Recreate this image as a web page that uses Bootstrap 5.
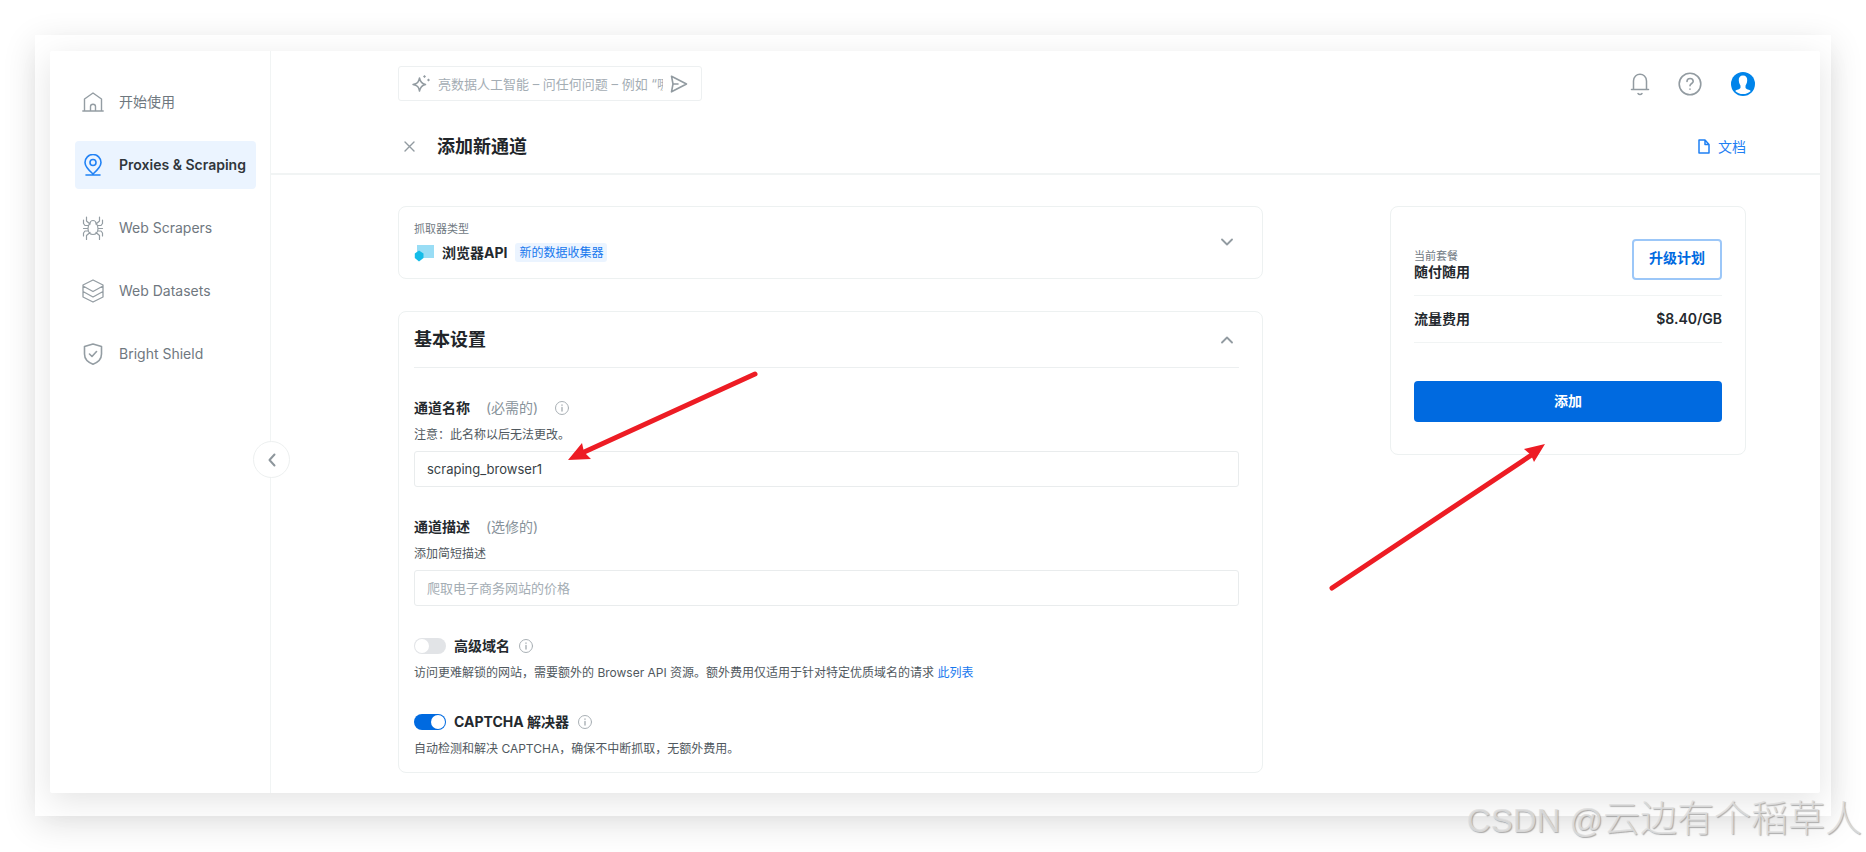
<!DOCTYPE html>
<html lang="zh-CN">
<head>
<meta charset="utf-8">
<meta name="viewport" content="width=device-width, initial-scale=1">
<title>添加新通道</title>
<link href="https://cdn.jsdelivr.net/npm/bootstrap@5.3.0/dist/css/bootstrap.min.css" rel="stylesheet">
<style>
:root{--line:#f1f4f4;--ink:#24292e;--soft:#6f787f;--blue:#006ae0}
body{font-family:Inter,"Noto Sans CJK SC",sans-serif;font-size:14px;line-height:22px;color:var(--ink);background:#fff;padding:35px;position:relative;min-height:100vh}
svg{display:block;flex:none;fill:none;stroke:currentColor;stroke-linecap:round;stroke-linejoin:round}
svg.solid{stroke:none}
button{font:inherit;color:inherit}
.btn{font-size:14px}
.muted-icon,.muted-icon .btn{color:#929ba1}
.frame{padding:16px 11px 23px 15px;background:#fff;box-shadow:0 8px 32px rgba(0,0,0,.12)}
.app{background:#fff;box-shadow:0 8px 32px rgba(0,0,0,.11);border-radius:2px}
.side{width:221px;padding:27px 14px 0 25px;border-right:1px solid var(--line);position:relative;flex:none}
.side .nav{gap:15px}
.side .nav-link{height:48px;padding:0 0 0 7px;gap:15px;color:var(--soft);border-radius:4px;white-space:nowrap}
.side .nav-link svg{color:#949da3}
.side .nav-link.active{background:#ebf4ff;color:#30363b;font-weight:600}
.side .nav-link.active svg{color:#2182f5}
.fold{position:absolute;right:-20px;top:390px;width:37px;height:37px;border:1px solid #edf0f0;background:#fff;color:#8d969c}
.gutter{padding-left:127px;padding-right:74px}
.ask{width:304px;height:35px;border:1px solid #edf0f1;border-radius:3px;padding:0 13px 0 12px;gap:7px}
.ask input{border:0;outline:0;min-width:0;flex:1;padding:0;color:var(--ink);background:none;font-size:13px}
.bar{padding-top:15px}
.tools{margin-right:-9px}
.heading{height:74px;padding-top:19px;border-bottom:2px solid var(--line)}
.heading h1,.panel h2{font-size:18px;line-height:26px;font-weight:700;margin:0}
.shut{margin-left:6px;margin-right:22px}
.docs{color:#1f80f3}
.cols{gap:127px;padding-top:31px;padding-bottom:20px}
.panel{border:1px solid #edf1f1;border-radius:8px;background:#fff}
.kind{height:73px;padding:0 29px 2px 15px;margin-bottom:32px}
.tiny{font-size:11px;line-height:18px;color:var(--soft)}
.chip{font-size:12px;line-height:19px;background:#ebf4ff;color:#1778ee;border-radius:3px;padding:0 4px}
.basic{padding:0 23px 14px 15px}
.basic header{height:56px;border-bottom:1px solid #eceff0;padding-right:6px;margin-bottom:29px}
.field{margin-bottom:29px;position:relative}
.field:last-child{margin-bottom:0}
.hint{font-size:12px;line-height:18px;margin-top:7px;color:#50585e}
.hint a{color:#1778ee}
.opt{color:#87929a}
.info{color:#a9b0b5}
.field .form-control{height:36px;margin-top:7px;padding:0 12px;font-size:13px;border:1px solid #e9eced;border-radius:3px;color:#383f45}
.field .form-control::placeholder,.ask input::placeholder{color:#a4adb4;opacity:1}
.form-switch .form-check-input{width:32px;height:16px;margin:0;border:0;background-color:#e2e4e7;--bs-form-switch-bg:url("data:image/svg+xml,%3csvg xmlns='http://www.w3.org/2000/svg' viewBox='-4 -4 8 8'%3e%3ccircle r='3.5' fill='%23fff'/%3e%3c/svg%3e")!important}
.form-switch .form-check-input:checked{background-color:var(--blue)}
.plan{width:356px;flex:none;padding:32px 23px;position:relative}
.plan .now{height:57px;border-bottom:1px solid var(--line);padding-bottom:14px}
.plan .rate{height:47px;border-bottom:1px solid var(--line)}
.up{height:41px;width:90px;border:2px solid #9cc7f8;border-radius:4px;color:var(--blue);font-weight:700;padding:0 0 4px}
.go{height:41px;margin-top:38px;background:var(--blue);border:0;border-radius:4px;color:#fff;font-weight:700;padding:0 0 2px}
.pointer{position:absolute;color:#ed1c24;z-index:2;pointer-events:none}
.stamp{position:absolute;right:4px;bottom:4px;font:300 37px/54px "Liberation Sans","Noto Sans CJK SC",sans-serif;color:rgba(222,222,222,.85);text-shadow:1px 1px 1px rgba(120,120,120,.6);white-space:nowrap}
.stamp span{font-size:33px}
</style>
</head>
<body>
<div class="frame">
 <div class="app d-flex">
  <aside class="side">
   <nav class="nav flex-column">
    <a class="nav-link d-flex align-items-center" href="#"><svg width="22" height="22" viewBox="0 0 22 22" stroke-width="1.4"><path d="M.8 20h20.4M2.5 20V8L11 2l8.500 6v12M8.500 20v-4.500c0-3 5-3 5 0V20"/></svg>开始使用</a>
    <a class="nav-link active d-flex align-items-center" href="#"><svg width="22" height="22" viewBox="0 0 22 22" stroke-width="1.6"><path d="M4 21h14M11 20C7 16.500 3 13 3 8.500a8 8 0 0 1 16 0C19 13 15 16.500 11 20z"/><circle cx="11" cy="8.500" r="3"/></svg>Proxies &amp; Scraping</a>
    <a class="nav-link d-flex align-items-center" href="#"><svg width="22" height="24" viewBox="0 0 22 24" stroke-width="1.200"><path d="M11 4.500c-2 0-3 2-3 3-1.500 1-2 3-2 5 0 3.500 2 6 5 6s5-2.500 5-6c0-2-.5-4-2-5 0-1-1-3-3-3zM4.500 1v4L8 8M17.500 1v4L14 8M1.500 4v3.500l1.500 2h3.500M20.500 4v3.500l-1.500 2h-3.500M1.500 12.500H6M20.500 12.500H16M1.500 20v-3l1.500-2h3.500M20.500 20v-3l-1.500-2h-3.500M4.500 23.500v-4l3.500-3M17.500 23.500v-4L14 16.500"/></svg>Web Scrapers</a>
    <a class="nav-link d-flex align-items-center" href="#"><svg width="22" height="24" viewBox="0 0 22 24" stroke-width="1.300"><path d="M11 1l10 5v12l-10 5-10-5V6zM1 7l10 5.500L21 7M1 12.500L11 18l10-5.500"/></svg>Web Datasets</a>
    <a class="nav-link d-flex align-items-center" href="#"><svg width="22" height="22" viewBox="0 0 22 22" stroke-width="1.600"><path d="M11 1l8.500 2.500V11c0 5-4 8.500-8.500 10.200C6.500 19.500 2.500 16 2.500 11V3.500zM7.500 11l2.500 2.500L14.500 8.500"/></svg>Bright Shield</a>
   </nav>
   <button class="fold rounded-circle d-flex align-items-center justify-content-center p-0" type="button" aria-label="收起"><svg width="8" height="14" viewBox="0 0 8 14" stroke-width="2"><path d="M6.500 1.500L1.500 7l5 5.500"/></svg></button>
  </aside>

  <main class="flex-grow-1">
   <div class="bar gutter d-flex justify-content-between align-items-center">
    <form class="ask muted-icon d-flex align-items-center">
     <svg width="20" height="20" viewBox="0 0 20 20" stroke-width="1.500"><path d="M8.500 4c.8 4 2 5.700 6 6.500-4 .8-5.200 2.500-6 6.500-.8-4-2-5.700-6.500-6.500 4.500-.8 5.700-2.500 6.500-6.500z"/><path d="M13.500 1l1.500 1.500L13.500 4 12 2.500zM17.500 4.500L19 6l-1.500 1.500L16 6z" fill="currentColor" stroke="none"/></svg>
     <input type="text" aria-label="提问" placeholder="亮数据人工智能 – 问任何问题 – 例如 “哪些产品适合我”">
     <button class="btn p-0 border-0" type="submit" aria-label="发送"><svg width="18" height="18" viewBox="0 0 18 18" stroke-width="1.600"><path d="M1.500 1.200L16.500 9 1.500 16.800 3 9zM3 9h5"/></svg></button>
    </form>
    <div class="tools muted-icon d-flex align-items-center">
     <button class="btn p-0 border-0 me-4" type="button" aria-label="通知"><svg width="26" height="24" viewBox="0 0 26 24" stroke-width="1.500"><path d="M4.500 17.500h17M6.500 17.500V9c0-9 13-9 13 0v8.500M11 21.500c1 1.200 3 1.200 4 0"/></svg></button>
     <button class="btn p-0 border-0 me-4" type="button" aria-label="帮助"><svg width="26" height="26" viewBox="0 0 26 26" stroke-width="1.600"><circle cx="13" cy="13" r="10.800"/><path d="M10 10.500c0-4 6.200-4 6.200 0 0 2-3.200 2-3.200 4.200M13 18v.3"/></svg></button>
     <button class="btn p-0 border-0 ms-1" type="button" aria-label="账户"><svg class="solid" width="24" height="24" viewBox="0 0 24 24"><circle cx="12" cy="12" r="12" fill="#0084ea"/><path fill="#fff" d="M12 3.500c-3 0-4.500 2-4.200 5 .2 3 1.200 4 1.700 5.200v2c-.5 1.800-4 1.800-5.300 3.200C8 23 16 23 19.800 18.900c-1.300-1.400-4.800-1.400-5.300-3.200v-2c.5-1.200 1.500-2.200 1.700-5.200.3-3-1.200-5-4.200-5z"/></svg></button>
    </div>
   </div>

   <div class="heading gutter muted-icon d-flex align-items-center">
    <button class="btn shut p-0 border-0" type="button" aria-label="关闭"><svg width="11" height="11" viewBox="0 0 11 11" stroke-width="1.400"><path d="M1 1l9 9M10 1l-9 9"/></svg></button>
    <h1 class="text-dark">添加新通道</h1>
    <a class="docs ms-auto d-flex align-items-center gap-2 text-decoration-none" href="#"><svg width="12" height="15" viewBox="0 0 12 15" stroke-width="1.500"><path d="M1 1h6l4 4.500V14H1zM7 1v4.500h4"/></svg>文档</a>
   </div>

   <div class="cols gutter d-flex align-items-start">
    <div class="flex-grow-1">
     <button class="panel kind w-100 d-flex align-items-center justify-content-between text-start" type="button">
      <span>
       <span class="tiny d-block">抓取器类型</span>
       <span class="d-flex align-items-center mt-1"><svg class="solid me-2" width="20" height="18" viewBox="0 0 20 18"><path fill="#99ddf5" d="M3 1h17v13H3z"/><path fill="#14bce8" d="M5 6.500l4.500 3v4.500L5 17.500.8 14V9.500z"/></svg><b class="fw-bold">浏览器API</b><span class="chip ms-2">新的数据收集器</span></span>
      </span>
      <span class="muted-icon"><svg width="12" height="8" viewBox="0 0 12 8" stroke-width="1.800"><path d="M1 1.500l5 5 5-5"/></svg></span>
     </button>

     <section class="panel basic">
      <header class="muted-icon d-flex align-items-center justify-content-between">
       <h2 class="text-dark">基本设置</h2>
       <button class="btn p-0 border-0" type="button" aria-label="折叠"><svg width="12" height="8" viewBox="0 0 12 8" stroke-width="1.800"><path d="M1 6.500l5-5 5 5"/></svg></button>
      </header>
      <div class="field">
       <div class="d-flex align-items-center gap-3"><label class="fw-bold" for="zname">通道名称</label><span class="opt">(必需的)</span><svg class="info" width="16" height="16" viewBox="0 0 16 16"><circle cx="8" cy="8" r="6.500"/><path d="M8 7.500v3.500M8 5v.3" stroke-width="1.400"/></svg></div>
       <div class="hint">注意：此名称以后无法更改。</div>
       <input class="form-control" id="zname" type="text" value="scraping_browser1">
       <svg class="pointer solid" style="left:150px;top:-30px" width="200" height="100" viewBox="0 0 200 100"><path d="M191 7L18 86" stroke="currentColor" stroke-width="5"/><path fill="currentColor" d="M4 93l14-17 2 9 7 7z"/></svg>
      </div>
      <div class="field">
       <div class="d-flex align-items-center gap-3"><label class="fw-bold" for="zdesc">通道描述</label><span class="opt">(选修的)</span></div>
       <div class="hint">添加简短描述</div>
       <input class="form-control" id="zdesc" type="text" placeholder="爬取电子商务网站的价格">
      </div>
      <div class="field">
       <div class="form-switch d-flex align-items-center gap-2 p-0"><input class="form-check-input" type="checkbox" role="switch" id="prem"><label class="fw-bold" for="prem">高级域名</label><svg class="info" width="16" height="16" viewBox="0 0 16 16"><circle cx="8" cy="8" r="6.500"/><path d="M8 7.500v3.500M8 5v.3" stroke-width="1.400"/></svg></div>
       <div class="hint">访问更难解锁的网站，需要额外的 Browser API 资源。额外费用仅适用于针对特定优质域名的请求 <a class="text-decoration-none" href="#">此列表</a></div>
      </div>
      <div class="field">
       <div class="form-switch d-flex align-items-center gap-2 p-0"><input class="form-check-input" type="checkbox" role="switch" id="cap" checked><label class="fw-bold" for="cap">CAPTCHA 解决器</label><svg class="info" width="16" height="16" viewBox="0 0 16 16"><circle cx="8" cy="8" r="6.500"/><path d="M8 7.500v3.500M8 5v.3" stroke-width="1.400"/></svg></div>
       <div class="hint">自动检测和解决 CAPTCHA，确保不中断抓取，无额外费用。</div>
      </div>
     </section>
    </div>

    <aside class="panel plan">
     <div class="now d-flex justify-content-between align-items-start">
      <div class="pt-1"><div class="tiny pt-1">当前套餐</div><div class="fw-bold lh-1">随付随用</div></div>
      <button class="btn up" type="button">升级计划</button>
     </div>
     <div class="rate d-flex justify-content-between align-items-center"><b>流量费用</b><span class="fw-semibold">$8.40/GB</span></div>
     <button class="btn go w-100" type="button">添加</button>
     <svg class="pointer solid" style="right:199px;top:230px" width="230" height="160" viewBox="0 0 230 160"><path d="M16 151L217 17" stroke="currentColor" stroke-width="5"/><path fill="currentColor" d="M229 7l-11 18-3-7-7-6z"/></svg>
    </aside>
   </div>
  </main>
 </div>
</div>
<div class="stamp"><span>CSDN @</span>云边有个稻草人</div>
<script src="https://cdn.jsdelivr.net/npm/bootstrap@5.3.0/dist/js/bootstrap.bundle.min.js"></script>
</body>
</html>
